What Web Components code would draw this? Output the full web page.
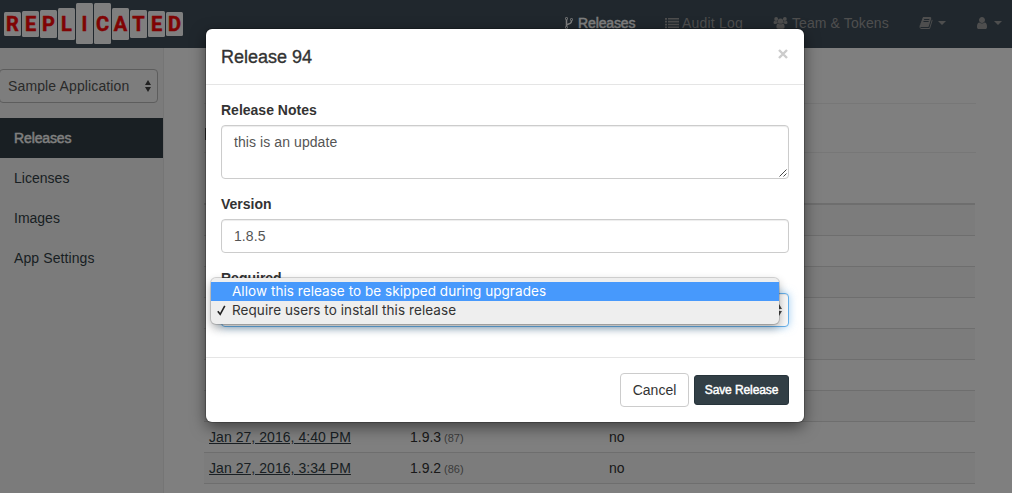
<!DOCTYPE html>
<html lang="en"><head><meta charset="utf-8"><title>Releases</title>
<style>
html,body{margin:0;height:100%;overflow:hidden;background:#fff}
body{font:14px/20px "Liberation Sans",Arial,sans-serif;color:#333}
</style></head><body>
<release-app></release-app>
<script>
const define=(name,html,setup)=>customElements.define(name,class extends HTMLElement{
  constructor(){super();const t=document.createElement('template');t.innerHTML=html;
    this.attachShadow({mode:'open'}).appendChild(t.content.cloneNode(true));}
  connectedCallback(){if(setup)setup(this,this.shadowRoot)}
});

const ICONS={
 fork:'<path d="M672 1472q0-40-28-68t-68-28-68 28-28 68 28 68 68 28 68-28 28-68zm0-1152q0-40-28-68t-68-28-68 28-28 68 28 68 68 28 68-28 28-68zm640 128q0-40-28-68t-68-28-68 28-28 68 28 68 68 28 68-28 28-68zm96 0q0 52-26 96.5t-70 69.5q-2 287-226 414-67 38-203 81-128 40-169.5 71t-41.5 100v26q44 25 70 69.5t26 96.5q0 80-56 136t-136 56-136-56-56-136q0-52 26-96.5t70-69.5v-820q-44-25-70-69.5t-26-96.5q0-80 56-136t136-56 136 56 56 136q0 52-26 96.5t-70 69.5v497q54-26 154-57 55-17 87.5-29.5t70.5-31 59-39.5 40.5-51 28-69.5 8.5-91.5q-44-25-70-69.5t-26-96.5q0-80 56-136t136-56 136 56 56 136z"/>',
 list:'<path d="M0 256h256v220H0zM0 620h256v220H0zM0 984h256v220H0zM0 1348h256v220H0zM384 256h1408v200H384zM384 620h1408v200H384zM384 984h1408v200H384zM384 1348h1408v200H384z"/>',
 users:'<circle cx="896" cy="660" r="340"/><circle cx="340" cy="380" r="245"/><circle cx="1452" cy="380" r="245"/><path d="M620 960q110 110 276 110t276-110q240 20 250 440 0 250-230 250H600q-230 0-230-250 10-420 250-440zM150 610q190 130 340 30 0 160 90 260-150 10-240 120H180Q0 1020 0 850q0-190 150-240zM1642 610q-190 130-340 30 0 160-90 260 150 10 240 120h160q180 0 180-170 0-190-150-240z"/>',
 book:'<path d="M1703 478q40 57 18 129l-275 906q-19 64-76.5 107.5t-122.5 43.5h-923q-77 0-148.5-53.5t-99.5-131.5q-24-67-2-127 0-4 3-27t4-37q1-8-3-21.5t-3-19.5q2-11 8-21t16.5-23.5 16.5-23.5q23-38 45-91.5t30-91.5q3-10 .5-30t-.5-28q3-11 17-28t17-23q21-36 42-92t25-90q1-9-2.5-32t.5-28q4-13 22-30.5t22-22.5q19-26 42.5-84.5t27.5-96.5q1-8-3-25.5t-2-26.5q2-8 9-18t18-23 17-21q8-12 16.5-30.5t15-35 16-36 19.5-32 26.5-23.5 36-11.5 47.5 5.5l-1 3q38-9 51-9h761q74 0 114 56t18 130l-274 906q-36 119-71.5 153.5t-128.5 34.5h-869q-27 0-38 15-11 16-1 43 24 70 144 70h923q29 0 56-15.5t35-41.5l300-987q7-22 5-57 38 15 59 43zm-1064 2q-4 13 2 22.5t20 9.5h608q13 0 25.5-9.5t16.5-22.5l21-64q4-13-2-22.5t-20-9.5h-608q-13 0-25.5 9.5t-16.5 22.5zm-83 256q-4 13 2 22.5t20 9.5h608q13 0 25.5-9.5t16.5-22.5l21-64q4-13-2-22.5t-20-9.5h-608q-13 0-25.5 9.5t-16.5 22.5z"/>',
 user:'<path d="M1536 1399q0 109-62.5 187t-150.5 78h-854q-88 0-150.5-78t-62.5-187q0-85 8.5-160.5t31.5-152 58.5-131 94-89 134.5-34.5q131 128 313 128t313-128q76 0 134.5 34.5t94 89 58.5 131 31.5 152 8.5 160.5zm-256-887q0 159-112.5 271.5t-271.5 112.5-271.5-112.5-112.5-271.5 112.5-271.5 271.5-112.5 271.5 112.5 112.5 271.5z"/>'
};
define('glyph-icon',`<style>:host{display:block;flex:none;height:14px}svg{display:block;height:14px;width:100%;fill:currentColor;overflow:visible}</style><svg></svg>`,(el,r)=>{
  const s=r.querySelector('svg');
  s.setAttribute('viewBox',el.getAttribute('name')==='fork'?'384 0 1024 1792':'0 0 1792 1792');
  s.innerHTML=ICONS[el.getAttribute('name')];
});
define('stepper-arrows',`<style>:host{display:block;width:6px;height:12px}svg{display:block}</style><svg width="6" height="12" viewBox="0 0 6 12" fill="#444"><path d="M3 0l3 5H0zM3 12L0 7h6z"/></svg>`);

define('brand-logo',`<style>
:host{display:flex;align-items:center;gap:1px;height:47px;padding-left:4px}
span{display:flex;align-items:center;justify-content:center;width:17px;background:#fff;border-radius:1.5px;color:#ff0808;font:bold 20px/20px Roboto,"Liberation Sans",sans-serif;-webkit-text-stroke:.5px #ff0808;padding-top:1px;box-sizing:border-box}
</style>`,(el,r)=>{
  if(r.querySelector('span'))return;
  const h=[24,26,28,32,41,41,32,28,26,24];
  [...'REPLICATED'].forEach((c,i)=>{const s=document.createElement('span');s.textContent=c;s.style.height=h[i]+'px';r.append(s)});
});
define('nav-item',`<style>
:host{display:flex;align-items:center;color:#9d9d9d;white-space:nowrap;height:20px}
:host([active]){color:#fff;-webkit-text-stroke:.45px #fff;letter-spacing:-.12px}
:host([caret])::after{content:"";border:4px solid transparent;border-top-color:currentColor;border-bottom:0;margin-left:var(--caret-gap,6px)}
</style><slot name="icon"></slot><slot></slot>`);
define('top-nav',`<style>
:host{display:flex;justify-content:space-between;height:48px;background:#404f5b}
nav{display:flex;padding-top:13px;width:447px}
</style><brand-logo></brand-logo><nav>
<nav-item active style="width:100px"><glyph-icon slot="icon" name="fork" style="width:8px;margin-right:5px"></glyph-icon>Releases</nav-item>
<nav-item style="width:108px;letter-spacing:.2px"><glyph-icon slot="icon" name="list" style="width:14px;margin-right:3px"></glyph-icon>Audit Log</nav-item>
<nav-item style="width:146px;letter-spacing:.1px"><glyph-icon slot="icon" name="users" style="width:15px;margin-right:4px"></glyph-icon>Team &amp; Tokens</nav-item>
<nav-item caret style="width:56px;--caret-gap:5px"><glyph-icon slot="icon" name="book" style="width:14px"></glyph-icon></nav-item>
<nav-item caret style="--caret-gap:5px"><glyph-icon slot="icon" name="user" style="width:14px"></glyph-icon></nav-item>
</nav>`);

define('side-link',`<style>
:host{display:flex;align-items:center;height:40px;padding-left:14px;color:#323f46;letter-spacing:.1px}
:host([active]){background:#323f46;color:#fff;-webkit-text-stroke:.45px #fff;letter-spacing:-.12px}
</style><slot></slot>`);
define('side-bar',`<style>
:host{display:block;width:163px;border-right:1px solid #eaeaea;background:#f7f7f7;box-sizing:content-box;padding-top:21px}
.select{display:flex;align-items:center;justify-content:space-between;box-sizing:border-box;width:159px;height:34px;margin:0 0 15px -1px;padding:0 6px 0 8px;border:1px solid #bbb;border-radius:4px;background:#fafafa;color:#555;letter-spacing:.13px}
</style><div class="select">Sample Application<stepper-arrows></stepper-arrows></div>
<side-link active>Releases</side-link><side-link style="letter-spacing:.02px">Licenses</side-link><side-link style="letter-spacing:0">Images</side-link><side-link>App Settings</side-link>`);

define('release-row',`<style>
:host{display:grid;grid-template-columns:201px 199px 1fr;align-items:center;height:31px;box-sizing:border-box;border-bottom:1px solid #dcdcdc;padding-left:5px}
:host([striped]){background:#f9f9f9}
a{color:#323f46;text-decoration:underline;letter-spacing:.05px}small{font-size:11px;color:#777;margin-left:-1px}
</style><a><slot name="date"></slot></a><span><slot name="version"></slot> <small><slot name="seq"></slot></small></span><slot></slot>`);
define('release-table',`<style>
:host{display:block;flex:1;padding:0 36px 0 40px}
header{height:55px;border-bottom:1px solid #eee}
.tools{display:flex;height:48px;border-bottom:1px solid #eee}
.tools::before{content:"";width:1px;height:12px;margin:24px 0 0 1px;background:#555}
.table{width:771px}
.head{height:50px;border-bottom:2px solid #ddd}
</style><header></header><div class="tools"></div><div class="table"><div class="head"></div><section></section></div>`,(el,r)=>{
  const section=r.querySelector('section');
  const rows=[null,null,null,null,null,null,null,['Jan 27, 2016, 4:40 PM','1.9.3','(87)','no'],['Jan 27, 2016, 3:34 PM','1.9.2','(86)','no'],null];
  rows.forEach((d,i)=>{const row=document.createElement('release-row');row.toggleAttribute('striped',i%2===0);
   if(d)row.innerHTML=`<span slot="date">${d[0]}</span><span slot="version">${d[1]}</span><span slot="seq">${d[2]}</span>${d[3]}`;
   section.append(row)});
});

define('form-field',`<style>
:host{display:block;margin-bottom:15px}
label{display:block;font-weight:bold;margin-bottom:5px}
.box{box-sizing:border-box;height:34px;border:1px solid #ccc;border-radius:4px;padding:6px 12px;color:#555;box-shadow:inset 0 1px 1px rgba(0,0,0,.075);display:flex;justify-content:space-between;letter-spacing:.08px}
:host([kind=area]) .box{height:54px;padding-right:0}
:host([kind=select]) .box{border-color:#66afe9;background:#f8f8f8;box-shadow:inset 0 1px 1px rgba(0,0,0,.075),0 0 8px rgba(102,175,233,.6);padding:10px 6px 10px 12px}
svg{align-self:flex-end;margin:0 1px -5px 0}
</style><label></label><div class="box"><slot></slot></div>`,(el,r)=>{
  r.querySelector('label').textContent=el.getAttribute('label');
  if(el.getAttribute('kind')==='area')r.querySelector('.box').insertAdjacentHTML('beforeend','<svg width="8" height="8" viewBox="0 0 8 8" stroke="#333" stroke-width=".9"><path d="M.5 7.5L7.5 .5M4.5 7.5L7.5 4.5"/></svg>');
});
define('action-button',`<style>
:host{display:flex;align-items:center;justify-content:center;box-sizing:border-box;width:69px;height:34px;border:1px solid #ccc;border-radius:4px;background:#fff}
:host([primary]){width:95px;height:30px;border-color:#27343b;border-radius:3px;background:#323f46;color:#fff;font-size:12px;-webkit-text-stroke:.45px #fff;letter-spacing:-.1px}
</style><slot></slot>`);
define('option-menu',`<style>
:host{display:block;box-sizing:border-box;padding:4px 0;background:#eee;border-radius:5px;box-shadow:0 0 0 1px rgba(0,0,0,.15),0 4px 10px rgba(0,0,0,.32);font:13.5px/19px Inter,"Liberation Sans",sans-serif;color:#333}
div{display:grid;grid-template-columns:21px 1fr;height:19px;white-space:nowrap;letter-spacing:.07px}
.on{background:#4799fc;color:#fff;letter-spacing:.06px}
svg{display:block;margin:4px 0 0 6px}
</style><div class="on"><i></i><span>Allow this release to be skipped during upgrades</span></div>
<div><svg width="9" height="11" viewBox="0 0 9 11" fill="none" stroke="#222" stroke-width="1.6"><path d="M.8 6.2L3.2 9.3L7.8 .8"/></svg><span>Require users to install this release</span></div>`);
define('modal-dialog',`<style>
:host{display:block;position:relative;width:598px;height:393px;border-radius:6px;background:#fff;box-shadow:0 5px 15px rgba(0,0,0,.5),0 0 0 1px rgba(0,0,0,.2)}
header{display:flex;justify-content:space-between;align-items:center;box-sizing:border-box;height:56px;padding:0 15px;border-bottom:1px solid #e5e5e5}
h4{font-size:18px;line-height:26px;font-weight:normal;-webkit-text-stroke:.35px #333;margin:0}
svg{margin:-5px 1px 0 0}
main{padding:15px;height:272px;box-sizing:border-box}
footer{display:flex;align-items:center;justify-content:flex-end;gap:5px;height:64px;padding:0 15px;border-top:1px solid #e5e5e5}
option-menu{position:absolute;left:5px;top:249px;width:568px;height:46px}
</style><header><h4>Release 94</h4><svg width="10" height="10" viewBox="0 0 10 10" stroke="#ccc" stroke-width="2.4"><path d="M1 1l8 8M9 1L1 9"/></svg></header>
<main><form-field kind="area" label="Release Notes">this is an update</form-field>
<form-field label="Version">1.8.5</form-field>
<form-field kind="select" label="Required"><span></span><stepper-arrows></stepper-arrows></form-field></main>
<footer><action-button>Cancel</action-button><action-button primary>Save Release</action-button></footer>
<option-menu></option-menu>`);
define('release-app',`<style>
:host{display:block;height:100vh;overflow:hidden}
.page{display:flex;height:calc(100vh - 48px)}
.backdrop{position:absolute;inset:0;background:rgba(0,0,0,.5);display:flex;justify-content:center;align-items:flex-start;padding:29px 2px 0 0}
</style><top-nav></top-nav><div class="page"><side-bar></side-bar><release-table></release-table></div>
<div class="backdrop"><modal-dialog></modal-dialog></div>`);
</script></body></html>
